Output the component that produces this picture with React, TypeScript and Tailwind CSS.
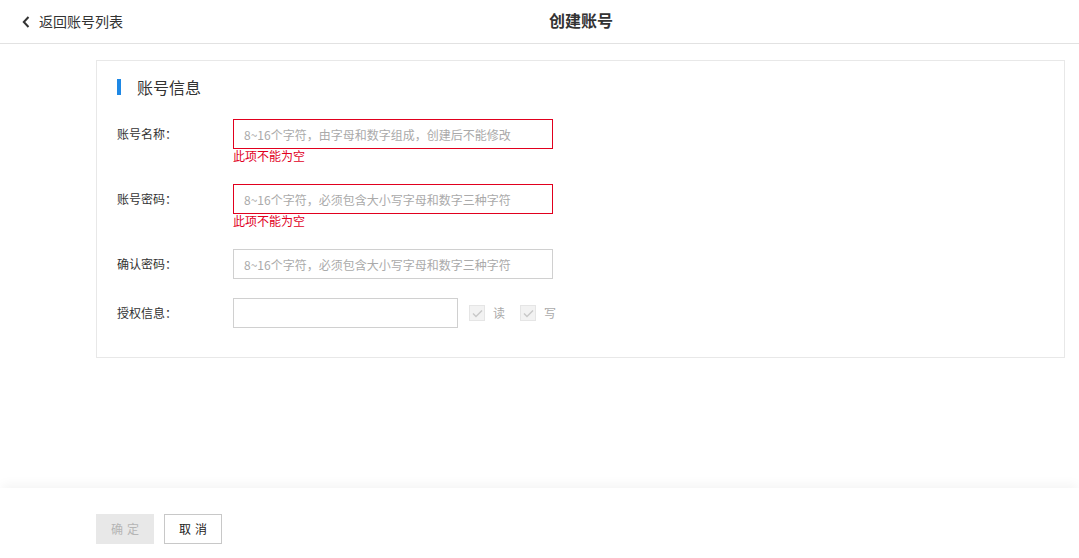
import { useState } from "react";

const font = { fontFamily: '"Noto Sans CJK SC", "Noto Sans", sans-serif' };

type Field = {
  label: string;
  placeholder: string;
  error?: string;
};

const fields: Field[] = [
  { label: "账号名称", placeholder: "8~16个字符，由字母和数字组成，创建后不能修改", error: "此项不能为空" },
  { label: "账号密码", placeholder: "8~16个字符，必须包含大小写字母和数字三种字符", error: "此项不能为空" },
  { label: "确认密码", placeholder: "8~16个字符，必须包含大小写字母和数字三种字符" },
];

function Check({ label }: { label: string }) {
  return (
    <label className="flex items-center gap-[8px] text-[12px] text-[#aaa]">
      <span className="w-[16px] h-[16px] bg-[#f2f2f2] border border-[#e5e5e5] flex items-center justify-center">
        <svg width="11" height="9" viewBox="0 0 11 9" fill="none">
          <polyline points="1,4.5 4,7.5 10,1.5" stroke="#c8c8c8" strokeWidth="1.4" />
        </svg>
      </span>
      {label}
    </label>
  );
}

export default function App() {
  const [values, setValues] = useState<string[]>(["", "", "", ""]);

  const setAt = (i: number, v: string) => {
    const next = values.slice();
    next[i] = v;
    setValues(next);
  };

  return (
    <div className="h-screen flex flex-col bg-white text-[#333]" style={font}>
      {/* Header */}
      <header className="h-[44px] shrink-0 flex items-center border-b border-[#e2e2e2]">
        <div className="w-[549px] pl-[22px] flex items-center gap-[9px] text-[14px] text-[#333]">
          <svg width="8" height="12" viewBox="0 0 8 12" fill="none">
            <polyline points="6.5,1 1.8,6 6.5,11" stroke="#333" strokeWidth="2" />
          </svg>
          <span>返回账号列表</span>
        </div>
        <h1 className="text-[16px] font-semibold text-[#333] -mt-[3px]">创建账号</h1>
      </header>

      {/* Content */}
      <main className="flex-1 pl-[96px] pr-[14px] pt-[16px]">
        <section className="border border-[#e8e8e8] pt-[17px] pb-[29px] px-[20px]">
          <div className="flex items-center gap-[16px] h-[18px] mb-[23px]">
            <span className="w-[4px] h-[16px] bg-[#1e88e5]" />
            <span className="text-[16px] text-[#333]">账号信息</span>
          </div>

          {fields.map((f, i) => (
            <div key={f.label} className="flex mb-[19px]">
              <div className="w-[116px] h-[30px] flex items-center text-[12px] text-[#333]">
                {f.label}：
              </div>
              <div className="flex flex-col">
                <input
                  value={values[i]}
                  onChange={(e) => setAt(i, e.target.value)}
                  placeholder={f.placeholder}
                  className={`w-[320px] h-[30px] px-[10px] text-[12px] outline-none placeholder:text-[#aaa] border ${
                    f.error ? "border-[#e1001e]" : "border-[#d0d0d0]"
                  }`}
                />
                {f.error && (
                  <span className="text-[12px] leading-[14px] h-[16px] text-[#e1001e]">{f.error}</span>
                )}
              </div>
            </div>
          ))}

          <div className="flex">
            <div className="w-[116px] h-[30px] flex items-center text-[12px] text-[#333]">授权信息：</div>
            <input
              value={values[3]}
              onChange={(e) => setAt(3, e.target.value)}
              className="w-[225px] h-[30px] px-[10px] text-[12px] outline-none border border-[#d0d0d0]"
            />
            <div className="flex items-center gap-[15px] ml-[11px]">
              <Check label="读" />
              <Check label="写" />
            </div>
          </div>
        </section>
      </main>

      {/* Footer */}
      <footer className="h-[70px] shrink-0 pl-[96px] pt-[26px] flex gap-[10px] bg-white shadow-[0_-6px_10px_-2px_rgba(0,0,0,0.045)]">
        <button className="w-[58px] h-[30px] bg-[#e8e8e8] text-[12px] text-[#b5b5b5] tracking-[4px] pl-[4px]">
          确定
        </button>
        <button className="w-[58px] h-[30px] border border-[#c8c8c8] bg-white text-[12px] text-[#222] tracking-[4px] pl-[4px]">
          取消
        </button>
      </footer>
    </div>
  );
}
